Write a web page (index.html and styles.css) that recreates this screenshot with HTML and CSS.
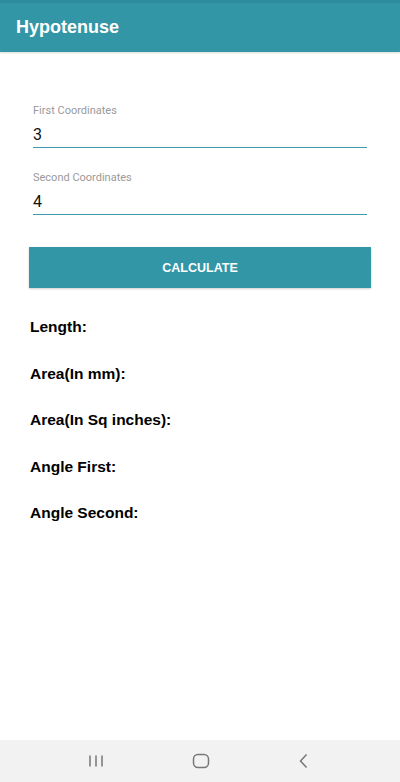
FILE: index.html
```html
<!DOCTYPE html>
<html>
<head>
<meta charset="utf-8">
<link rel="stylesheet" href="styles.css">
</head>
<body>
<div class="screen">
  <div class="status"></div>
  <header class="appbar"><h1 class="title">Hypotenuse</h1></header>
  <main class="content">
    <div class="field first">
      <label class="label">First Coordinates</label>
      <div class="value">3</div>
    </div>
    <div class="field">
      <label class="label">Second Coordinates</label>
      <div class="value">4</div>
    </div>
    <button class="calc">CALCULATE</button>
    <div class="results">
      <div class="result">Length:</div>
      <div class="result">Area(In mm):</div>
      <div class="result">Area(In Sq inches):</div>
      <div class="result">Angle First:</div>
      <div class="result">Angle Second:</div>
    </div>
  </main>
  <nav class="navbar">
    <svg class="nav-icon" width="16" height="14" viewBox="0 0 16 14"><path d="M2 1.5v11M8 1.5v11M14 1.5v11" stroke="#777" stroke-width="1.5" fill="none"/></svg>
    <svg class="nav-icon" width="18" height="16" viewBox="0 0 18 16"><rect x="1.5" y="1.5" width="15" height="13" rx="4.5" stroke="#777" stroke-width="1.5" fill="none"/></svg>
    <svg class="nav-icon" width="12" height="16" viewBox="0 0 12 16"><path d="M8.5 1.5L2.5 8l6 6.5" stroke="#777" stroke-width="1.5" fill="none"/></svg>
  </nav>
</div>
</body>
</html>
```
FILE: styles.css
```css
* { box-sizing: border-box; }
html, body { margin: 0; padding: 0; }
body {
  width: 400px;
  height: 782px;
  background: #fff;
  font-family: "Liberation Sans", Arial, sans-serif;
  overflow: hidden;
}
.screen {
  display: flex;
  flex-direction: column;
  height: 782px;
}
.status {
  height: 3px;
  background: #2d8d9c;
}
.appbar {
  height: 49px;
  background: #3396a6;
  display: flex;
  align-items: center;
  padding-left: 16px;
  box-shadow: 0 1px 2px rgba(0,0,0,0.15);
}
.title {
  margin: 0;
  color: #fff;
  font-size: 18px;
  font-weight: bold;
  line-height: 1;
  padding-bottom: 2px;
}
.content {
  flex: 1;
  padding: 0 29px;
}
.field {
  margin: 0 4px;
  display: flex;
  flex-direction: column;
}
.field.first { margin-top: 52px; }
.field + .field { margin-top: 23px; }
.label {
  color: #9a9a9a;
  font-family: Roboto, "Liberation Sans", sans-serif;
  font-size: 11px;
  line-height: 13px;
}
.value {
  margin-top: 9px;
  font-family: Roboto, "Liberation Sans", sans-serif;
  font-size: 16px;
  line-height: 18px;
  color: #111;
  padding-bottom: 3px;
  border-bottom: 1.5px solid #3a9aaa;
}
.calc {
  display: block;
  width: 342px;
  height: 41px;
  margin-top: 32px;
  border: none;
  background: #3396a6;
  color: #fff;
  font-family: "Liberation Sans", Arial, sans-serif;
  font-size: 12.5px;
  font-weight: bold;
  box-shadow: 0 1px 2px rgba(0,0,0,0.2);
  padding: 0;
}
.results {
  margin-top: 30px;
  display: flex;
  flex-direction: column;
  gap: 28.5px;
  padding-left: 1px;
}
.result {
  font-size: 15.5px;
  font-weight: bold;
  line-height: 18px;
  color: #000;
}
.navbar {
  height: 42px;
  background: #f2f2f2;
  display: flex;
  align-items: center;
  justify-content: space-between;
  padding: 0 90px 0 88px;
}
.nav-icon { display: block; }
```
